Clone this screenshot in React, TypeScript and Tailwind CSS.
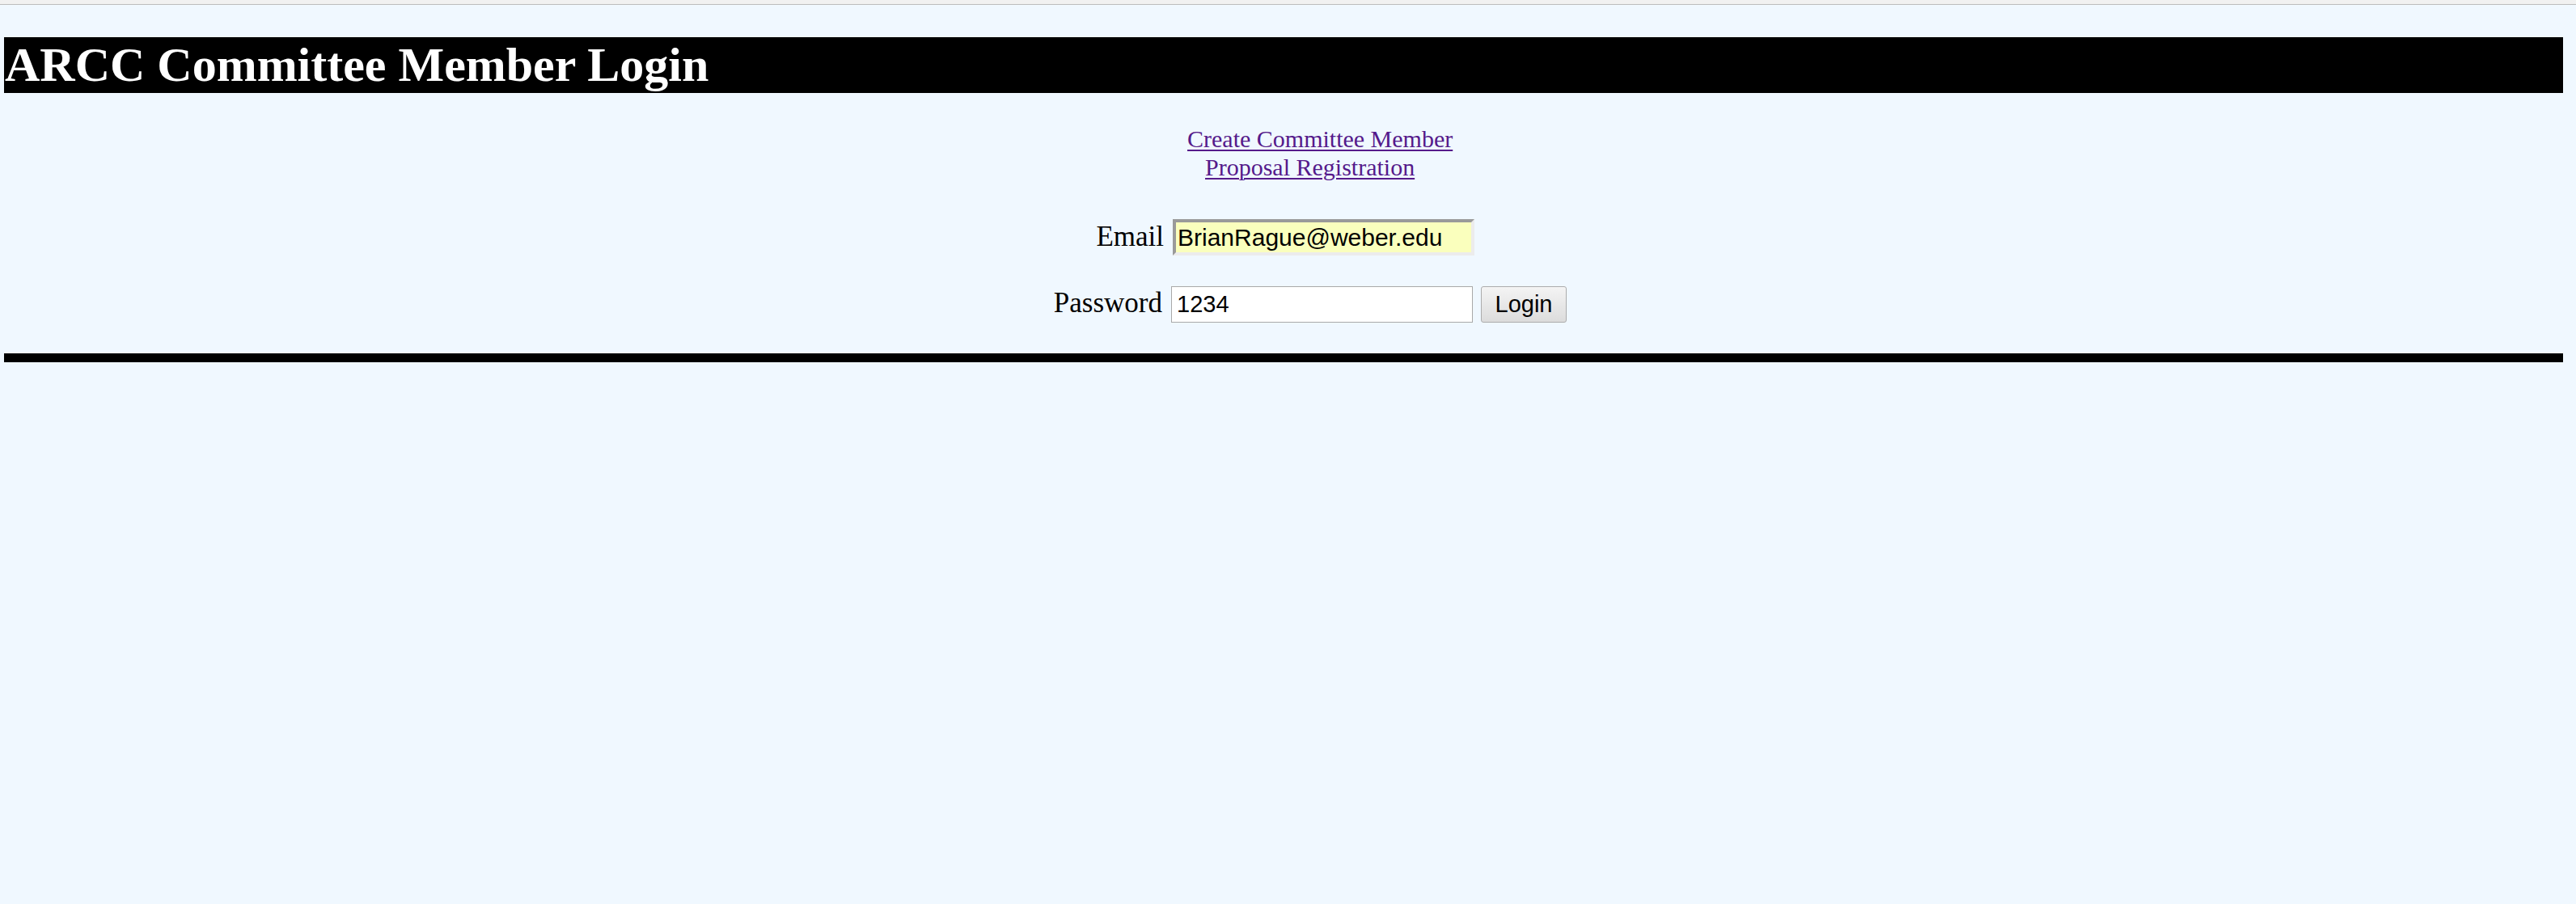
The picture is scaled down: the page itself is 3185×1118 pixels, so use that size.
export default function App() {
  return (
    <div className="min-h-[1118px] w-full bg-[#f0f8ff] font-['Liberation_Serif',serif] text-black">
      <div className="h-[6px] bg-[#f1f1f1] border-b border-[#bcbcbc]" />
      <div className="pl-[5px] pr-[16px] pt-[40px]">
        <h1 className="bg-black text-white font-bold text-[60px] leading-[69px] h-[69px] pl-[1px] whitespace-nowrap">
          ARCC Committee Member Login
        </h1>
        <div className="mt-[40px] flex flex-col items-start text-[30px] leading-[34.5px] whitespace-nowrap">
          <a href="#" className="ml-[1463px] text-[#551a8b] underline decoration-2 underline-offset-[3px]">
            Create Committee Member
          </a>
          <a href="#" className="ml-[1485px] text-[#551a8b] underline decoration-2 underline-offset-[3px]">
            Proposal Registration
          </a>
        </div>
        <div className="mt-[47px] flex items-baseline">
          <label className="ml-[1284px] w-[150px] text-right text-[35px] leading-[40px]">Email</label>
          <input
            type="text"
            defaultValue="BrianRague@weber.edu"
            className="ml-[11px] w-[373px] h-[45px] border-4 border-t-[#9a9a9a] border-l-[#9a9a9a] border-b-[#ececec] border-r-[#ececec] bg-[#faffbd] pl-[2px] font-['Liberation_Sans',Arial,sans-serif] text-[30px] text-black outline-none"
          />
        </div>
        <div className="mt-[38px] flex items-baseline">
          <label className="ml-[1284px] w-[148px] text-right text-[35px] leading-[40px]">Password</label>
          <input
            type="text"
            defaultValue="1234"
            className="ml-[11px] w-[373px] h-[45px] border border-[#a9a9a9] bg-white pl-[6px] font-['Liberation_Sans',Arial,sans-serif] text-[29px] text-black outline-none"
          />
          <button className="ml-[10px] w-[106px] h-[45px] rounded-[3px] border border-[#acacac] bg-linear-to-b from-[#f4f4f4] to-[#dcdcdc] font-['Liberation_Sans',Arial,sans-serif] text-[29px] text-black">
            Login
          </button>
        </div>
        <div className="mt-[38px] h-[11px] bg-black" />
      </div>
    </div>
  );
}
